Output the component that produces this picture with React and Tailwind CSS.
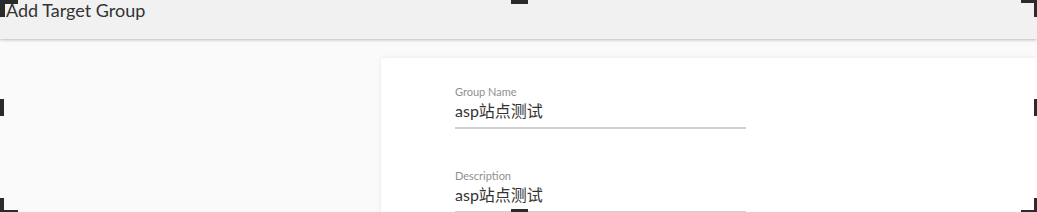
const Handle = ({ className }) => <div className={`absolute z-20 bg-[#2b2b2b] ${className}`} />;

function Field({ label, value }) {
  return (
    <div className="flex flex-col">
      <label className="text-[11px] leading-[14px] text-[#8f8f8f]">{label}</label>
      <div className="mt-[1px] text-[16px] leading-[22px] text-[#333] pb-[5px] border-b-2 border-[#d0d0d0]">{value}</div>
    </div>
  );
}

export default function App() {
  return (
    <div className="relative w-[1037px] h-[212px] overflow-hidden bg-[#fafafa] font-['Lato','Noto_Sans_CJK_SC',sans-serif]">
      <header className="relative z-10 h-[39px] bg-[#f1f1f1] shadow-[0_1px_3px_rgba(0,0,0,0.25)] px-[6px] flex items-start">
        <h1 className="text-[18px] leading-[20px] text-[#333]">Add Target Group</h1>
      </header>
      <main className="flex pl-[381px] pt-[19px]">
        <section className="flex-1 h-[200px] bg-white rounded-tl-[3px] shadow-[0_0_4px_rgba(0,0,0,0.08)] pl-[74px] pt-[27px]">
          <div className="flex flex-col w-[291px] gap-[40px]">
            <Field label="Group Name" value="asp站点测试" />
            <Field label="Description" value="asp站点测试" />
          </div>
        </section>
      </main>
      {/* selection handles overlay */}
      <Handle className="left-0 top-0 w-[18px] h-[4px]" />
      <Handle className="left-0 top-0 w-[5px] h-[17px]" />
      <Handle className="left-[511px] top-0 w-[17px] h-[4px]" />
      <Handle className="right-0 top-0 w-[16px] h-[3px]" />
      <Handle className="right-0 top-0 w-[3px] h-[17px]" />
      <Handle className="left-0 top-[99px] w-[4px] h-[17px]" />
      <Handle className="right-0 top-[99px] w-[3px] h-[17px]" />
      <Handle className="left-0 bottom-0 w-[4px] h-[14px]" />
      <Handle className="left-0 bottom-0 w-[18px] h-[2px]" />
      <Handle className="left-[511px] bottom-0 w-[17px] h-[3px]" />
      <Handle className="right-0 bottom-0 w-[3px] h-[14px]" />
      <Handle className="right-0 bottom-0 w-[16px] h-[2px]" />
    </div>
  );
}
